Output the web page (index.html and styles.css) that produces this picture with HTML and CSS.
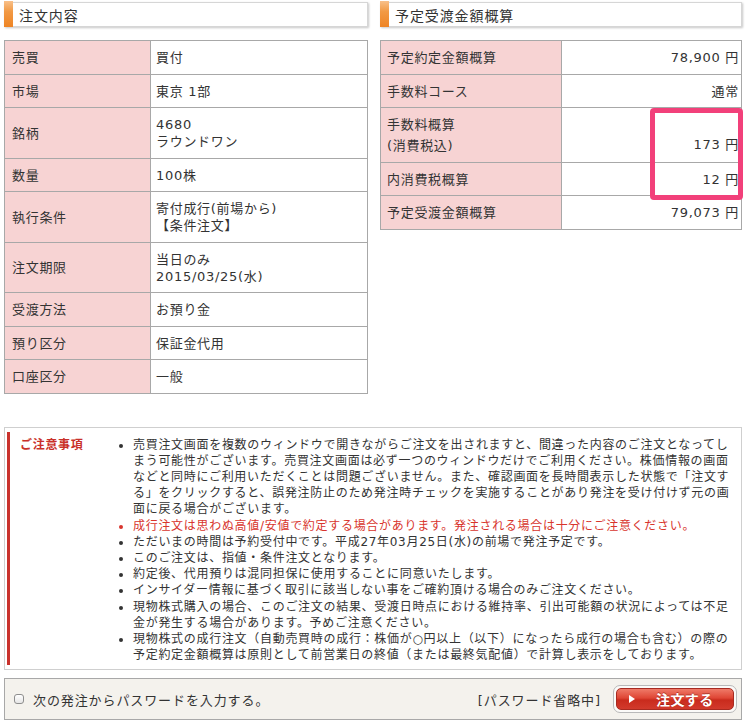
FILE: index.html
```html
<!DOCTYPE html>
<html lang="ja">
<head>
<meta charset="utf-8">
<title>注文確認</title>
<link rel="stylesheet" href="styles.css">
</head>
<body>
<div class="page">
  <div class="top">
    <section class="col">
      <h2 class="sec-head"><span class="sec-bar"></span><span class="sec-title">注文内容</span></h2>
      <table class="info order">
        <tr><th>売買</th><td>買付</td></tr>
        <tr><th>市場</th><td>東京 1部</td></tr>
        <tr><th>銘柄</th><td>4680<br>ラウンドワン</td></tr>
        <tr><th>数量</th><td>100株</td></tr>
        <tr><th>執行条件</th><td>寄付成行(前場から)<br>【条件注文】</td></tr>
        <tr><th>注文期限</th><td>当日のみ<br>2015/03/25(水)</td></tr>
        <tr><th>受渡方法</th><td>お預り金</td></tr>
        <tr><th>預り区分</th><td>保証金代用</td></tr>
        <tr><th>口座区分</th><td>一般</td></tr>
      </table>
    </section>
    <section class="col col-right">
      <h2 class="sec-head"><span class="sec-bar"></span><span class="sec-title">予定受渡金額概算</span></h2>
      <table class="info calc">
        <tr><th>予定約定金額概算</th><td class="num">78,900 円</td></tr>
        <tr><th>手数料コース</th><td class="num">通常</td></tr>
        <tr><th>手数料概算<div class="sub">(消費税込)</div></th><td class="num low">173 円</td></tr>
        <tr><th>内消費税概算</th><td class="num">12 円</td></tr>
        <tr><th>予定受渡金額概算</th><td class="num">79,073 円</td></tr>
      </table>
      <div class="highlight"></div>
    </section>
  </div>

  <div class="notice">
    <div class="notice-inner">
      <div class="notice-title">ご注意事項</div>
      <ul class="notice-list">
        <li>売買注文画面を複数のウィンドウで開きながらご注文を出されますと、間違った内容のご注文となってし<br>まう可能性がございます。売買注文画面は必ず一つのウィンドウだけでご利用ください。株価情報の画面<br>などと同時にご利用いただくことは問題ございません。また、確認画面を長時間表示した状態で「注文す<br>る」をクリックすると、誤発注防止のため発注時チェックを実施することがあり発注を受け付けず元の画<br>面に戻る場合がございます。</li>
        <li class="warn">成行注文は思わぬ高値/安値で約定する場合があります。発注される場合は十分にご注意ください。</li>
        <li>ただいまの時間は予約受付中です。平成27年03月25日(水)の前場で発注予定です。</li>
        <li>このご注文は、指値・条件注文となります。</li>
        <li>約定後、代用預りは混同担保に使用することに同意いたします。</li>
        <li>インサイダー情報に基づく取引に該当しない事をご確約頂ける場合のみご注文ください。</li>
        <li>現物株式購入の場合、このご注文の結果、受渡日時点における維持率、引出可能額の状況によっては不足<br>金が発生する場合があります。予めご注意ください。</li>
        <li>現物株式の成行注文（自動売買時の成行：株価が○円以上（以下）になったら成行の場合も含む）の際の<br>予定約定金額概算は原則として前営業日の終値（または最終気配値）で計算し表示をしております。</li>
      </ul>
    </div>
  </div>

  <div class="action-bar">
    <label class="pw-check"><input type="checkbox" class="chk"><span>次の発注からパスワードを入力する。</span></label>
    <div class="action-right">
      <span class="pw-state">[パスワード省略中]</span>
      <button class="order-btn" type="button"><span class="btn-inner"><span class="btn-tri"></span><span class="btn-text">注文する</span></span></button>
    </div>
  </div>
</div>
</body>
</html>
```

FILE: styles.css
```css
* { box-sizing: border-box; }

body {
  margin: 0;
  background: #fff;
  color: #333;
  font-family: "DejaVu Sans", "Noto Sans CJK JP", sans-serif;
  font-size: 13px;
}

.page {
  width: 747px;
  padding: 2px 5px 0 4px;
}

.top {
  display: grid;
  grid-template-columns: 364px 362px;
  column-gap: 12px;
  align-items: start;
}

.col { position: relative; }

.sec-head {
  margin: 0 0 13px;
  height: 25px;
  display: flex;
  align-items: center;
  border: 1px solid #d6d6d6;
  border-left: none;
  box-shadow: 1px 1px 2px rgba(0, 0, 0, 0.22);
  font-weight: normal;
  font-size: 14px;
  letter-spacing: 0.9px;
  color: #333;
}

.sec-bar {
  align-self: stretch;
  width: 9px;
  margin: -2px 0 -1px;
  background: linear-gradient(#f8c08a 0%, #f29a45 40%, #ee8424 100%);
}

.sec-title { padding-left: 6px; }

.info {
  width: 100%;
  border-collapse: collapse;
  letter-spacing: 0.7px;
}

.info th,
.info td {
  border: 1px solid #a8a8a8;
  padding: 8px 5px 7.5px;
  line-height: 17px;
  text-align: left;
  vertical-align: middle;
  font-weight: normal;
}

.info th {
  background: #f7d3d3;
  padding-left: 7px;
}

.order th { width: 146px; }
.calc th { width: 181px; padding-left: 6px; }

.info .num {
  text-align: right;
  padding-right: 2px;
}

.info .low {
  vertical-align: bottom;
  padding-bottom: 9px;
}

.sub { margin-top: 4px; }

.highlight {
  position: absolute;
  left: 270px;
  top: 106px;
  width: 93px;
  height: 92px;
  border: 5px solid #f2407a;
  border-radius: 4px;
}

.notice {
  margin-top: 33px;
  border: 1px solid #cfcfcf;
  padding: 4px 3px 4px 2px;
}

.notice-inner {
  display: flex;
  border-left: 3px solid #c9322c;
  padding: 5px 0 2px 10px;
  font-size: 12px;
  letter-spacing: 0.7px;
  line-height: 16.2px;
}

.notice-title {
  width: 93px;
  flex: none;
  color: #c9302a;
  font-weight: bold;
}

.notice-list {
  margin: 0;
  padding: 0 0 0 20px;
  list-style: disc;
  white-space: nowrap;
}

.notice-list .warn { color: #d8352d; }

.action-bar {
  margin-top: 8px;
  height: 42px;
  border: 1px solid #a8a8a8;
  background: #f4f2ed;
  display: flex;
  align-items: center;
  justify-content: space-between;
  padding: 0 4px 0 9px;
  letter-spacing: 0.9px;
}

.pw-check {
  display: flex;
  align-items: center;
  gap: 9px;
}

.chk {
  appearance: none;
  -webkit-appearance: none;
  margin: 0;
  width: 10px;
  height: 10px;
  border: 1px solid #8e8e8e;
  border-radius: 3px;
  background: linear-gradient(#fff, #e6e6e6);
}

.action-right {
  display: flex;
  align-items: center;
  gap: 12px;
}

.order-btn {
  margin: 0;
  padding: 2px;
  width: 124px;
  height: 28px;
  border: 1px solid #b9b9b9;
  border-radius: 7px;
  background: #fbfaf8;
  font: inherit;
  cursor: pointer;
}

.btn-inner {
  display: flex;
  align-items: center;
  height: 100%;
  border-radius: 5px;
  border: 1px solid #a72a20;
  background: linear-gradient(#ef7a68 0%, #df4635 45%, #c92b1d 55%, #d23a2c 100%);
  padding-left: 12px;
}

.btn-tri {
  width: 0;
  height: 0;
  border-left: 6px solid #fff;
  border-top: 4px solid transparent;
  border-bottom: 4px solid transparent;
}

.btn-text {
  margin-left: 21px;
  color: #fff;
  font-weight: bold;
  font-size: 14px;
  letter-spacing: 0.4px;
  text-shadow: 0 -1px 0 rgba(120, 20, 10, 0.5);
}
```
